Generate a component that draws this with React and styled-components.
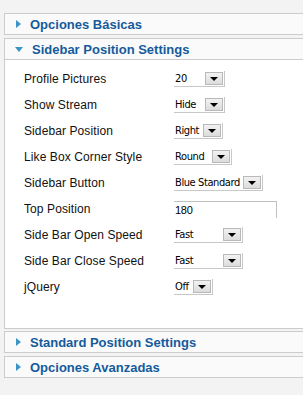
import React from 'react';
import styled, { createGlobalStyle } from 'styled-components';

const GlobalStyle = createGlobalStyle`
  html, body {
    margin: 0;
    padding: 0;
    background: #f3f3f3;
    font-family: "Liberation Sans", Arial, sans-serif;
  }
`;

const Page = styled.div`
  width: 303px;
  height: 395px;
  overflow: hidden;
  padding: 13px 0 0 4px;
  box-sizing: border-box;
`;

const Panel = styled.div`
  border: 1px solid #cccccc;
  border-right: none;
  background: #fafafa;
  margin-bottom: ${(p) => p.$gap || 3}px;
`;

const Header = styled.div`
  height: 20px;
  display: flex;
  align-items: center;
  padding-left: ${(p) => (p.$open ? 10 : 11)}px;
  gap: 9px;
  border-bottom: ${(p) => (p.$open ? '1px solid #cccccc' : 'none')};
  color: #155b9c;
  font-size: 13px;
  font-weight: bold;
`;

const Arrow = styled.span`
  width: 0;
  height: 0;
  ${(p) =>
    p.$open
      ? `border-left: 4px solid transparent;
         border-right: 4px solid transparent;
         border-top: 5px solid #3b94c8;`
      : `border-top: 4px solid transparent;
         border-bottom: 4px solid transparent;
         border-left: 5px solid #3b94c8;`}
`;

const Content = styled.div`
  background: #ffffff;
  padding: 6px 0 28px 19px;
`;

const Row = styled.div`
  height: 26px;
  display: flex;
  align-items: center;
`;

const Label = styled.span`
  width: 150px;
  font-size: 12px;
  letter-spacing: 0.1px;
  color: #111;
`;

const SelectBox = styled.div`
  width: ${(p) => p.$w}px;
  height: 16px;
  box-sizing: border-box;
  display: flex;
  align-items: center;
  justify-content: space-between;
  background: #ffffff;
  border-right: 1px solid #c8c8c8;
  border-bottom: 1px solid #c8c8c8;
  font-family: Tahoma, "DejaVu Sans Condensed", "Liberation Sans", sans-serif;
  font-size: 11px;
  letter-spacing: -0.4px;
  color: #000;
`;

const SelectText = styled.span`
  padding-left: 1px;
`;

const DropButton = styled.span`
  width: 18px;
  height: 13px;
  margin-right: 1px;
  box-sizing: border-box;
  background: linear-gradient(#f2f2f2, #dcdcdc);
  border: 1px solid #b9b9b9;
  display: flex;
  align-items: center;
  justify-content: center;
  &::after {
    content: '';
    border-left: 4px solid transparent;
    border-right: 4px solid transparent;
    border-top: 4px solid #000;
  }
`;

const TextInput = styled.div`
  width: 103px;
  height: 17px;
  box-sizing: border-box;
  border-top: 1px solid #c0c0c0;
  border-right: 1px solid #c0c0c0;
  background: #fff;
  font-size: 11px;
  letter-spacing: -0.3px;
  padding: 2px 0 0 1px;
  color: #000;
`;

const Select = ({ value, width }) => (
  <SelectBox $w={width}>
    <SelectText>{value}</SelectText>
    <DropButton />
  </SelectBox>
);

const rows = [
  ['Profile Pictures', '20', 51],
  ['Show Stream', 'Hide', 51],
  ['Sidebar Position', 'Right', 49],
  ['Like Box Corner Style', 'Round', 58],
  ['Sidebar Button', 'Blue Standard', 89],
  ['Top Position', null, 0],
  ['Side Bar Open Speed', 'Fast', 69],
  ['Side Bar Close Speed', 'Fast', 69],
  ['jQuery', 'Off', 39],
];

export default function App() {
  return (
    <>
      <GlobalStyle />
      <Page>
        <Panel>
          <Header>
            <Arrow />
            Opciones Básicas
          </Header>
        </Panel>
        <Panel $gap={2}>
          <Header $open>
            <Arrow $open />
            Sidebar Position Settings
          </Header>
          <Content>
            {rows.map(([label, value, w]) => (
              <Row key={label}>
                <Label>{label}</Label>
                {value ? <Select value={value} width={w} /> : <TextInput>180</TextInput>}
              </Row>
            ))}
          </Content>
        </Panel>
        <Panel>
          <Header>
            <Arrow />
            Standard Position Settings
          </Header>
        </Panel>
        <Panel>
          <Header>
            <Arrow />
            Opciones Avanzadas
          </Header>
        </Panel>
      </Page>
    </>
  );
}
